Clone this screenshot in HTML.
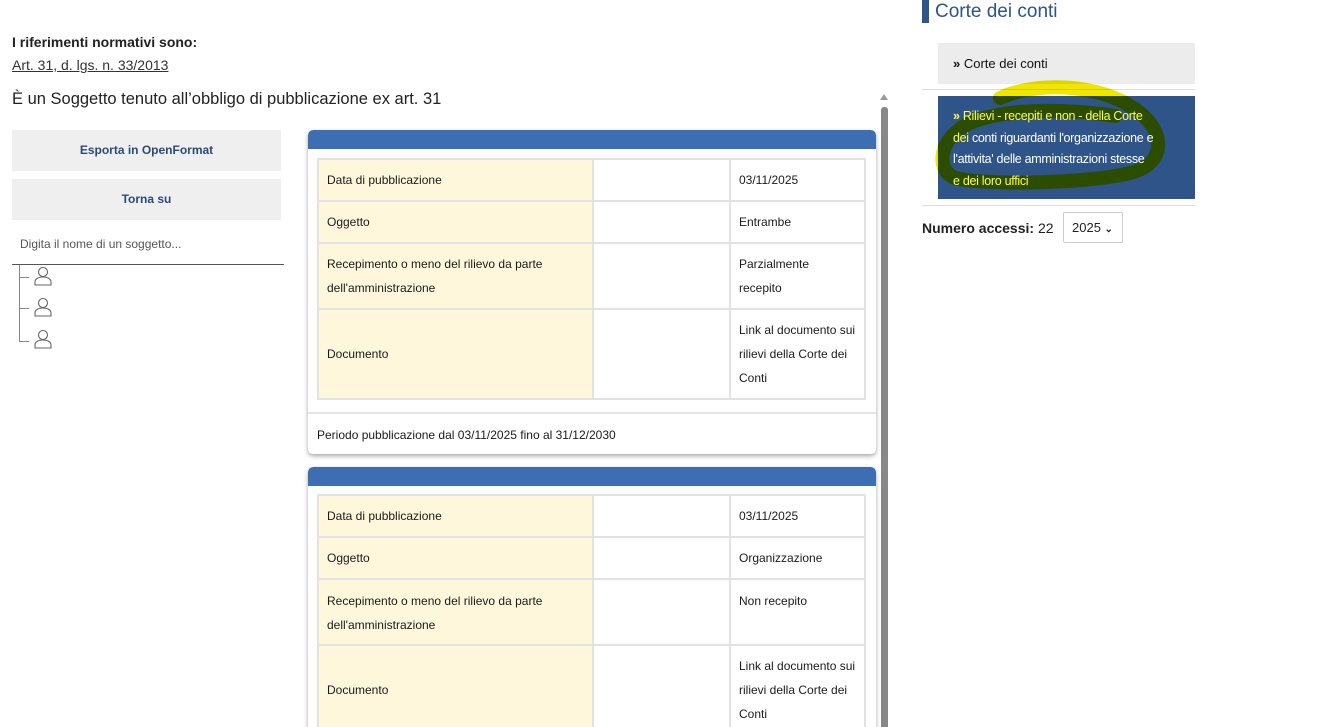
<!DOCTYPE html>
<html><head><meta charset="utf-8"><style>
*{margin:0;padding:0;box-sizing:border-box}
html,body{width:1342px;height:727px;overflow:hidden}
body{background:#fff;font-family:"Liberation Sans",sans-serif;color:#1a1a1a;position:relative}
.a{position:absolute}
.btn{position:absolute;left:12px;width:269px;height:41px;background:#efefef;color:#2e4a73;font-weight:bold;font-size:12px;text-align:center;line-height:41px}
.card{position:absolute;left:308px;width:568px;background:#fff;border-radius:5px;box-shadow:0 2px 5px rgba(0,0,0,.35);overflow:hidden}
.card .hd{height:19px;background:#3d6db3;border-radius:5px 5px 0 0}
table{position:absolute;left:9px;width:549px;border-collapse:collapse;font-size:12px;border:1px solid #ddd}
td{border:2px solid #e2e2e2;padding:0 8px;vertical-align:middle;line-height:24px}
td.l{background:#fff7dc;width:275px}
td.m{width:137px}
.ft{position:absolute;left:0;width:568px;border-top:2px solid #e4e4e4;font-size:12px;padding-left:9px;line-height:42px}
.person{position:absolute;left:34px;width:18px;height:20px}
</style></head><body>
<div class="a" style="left:12px;top:34px;font-size:14px;font-weight:bold;color:#222">I riferimenti normativi sono:</div>
<div class="a" style="left:12px;top:57px;font-size:14px;color:#333;text-decoration:underline">Art. 31, d. lgs. n. 33/2013</div>
<div class="a" style="left:12px;top:90px;font-size:16.5px;color:#222">È un Soggetto tenuto all’obbligo di pubblicazione ex art. 31</div>

<div class="btn" style="top:130px">Esporta in OpenFormat</div>
<div class="btn" style="top:179px">Torna su</div>
<div class="a" style="left:20px;top:237px;font-size:12px;color:#555">Digita il nome di un soggetto...</div>
<div class="a" style="left:12px;top:264px;width:272px;height:1px;background:#555"></div>
<div class="a" style="left:19px;top:265px;width:1px;height:77px;background:#888"></div>
<div class="a" style="left:19px;top:277px;width:10px;height:1px;background:#888"></div>
<div class="a" style="left:19px;top:308px;width:10px;height:1px;background:#888"></div>
<div class="a" style="left:19px;top:341px;width:10px;height:1px;background:#888"></div>
<svg class="person" style="top:266px" viewBox="0 0 18 20"><circle cx="9" cy="6" r="4.5" fill="none" stroke="#666" stroke-width="1.1"/><path d="M1 19v-3c0-3 3-5 8-5s8 2 8 5v3z" fill="none" stroke="#666" stroke-width="1.1"/></svg>
<svg class="person" style="top:297px" viewBox="0 0 18 20"><circle cx="9" cy="6" r="4.5" fill="none" stroke="#666" stroke-width="1.1"/><path d="M1 19v-3c0-3 3-5 8-5s8 2 8 5v3z" fill="none" stroke="#666" stroke-width="1.1"/></svg>
<svg class="person" style="top:329px" viewBox="0 0 18 20"><circle cx="9" cy="6" r="4.5" fill="none" stroke="#666" stroke-width="1.1"/><path d="M1 19v-3c0-3 3-5 8-5s8 2 8 5v3z" fill="none" stroke="#666" stroke-width="1.1"/></svg>

<div class="card" style="top:130px;height:324px"><div class="hd"></div>
<table style="top:28px">
<tr style="height:42px"><td class="l">Data di pubblicazione</td><td class="m"></td><td>03/11/2025</td></tr>
<tr style="height:42px"><td class="l">Oggetto</td><td class="m"></td><td>Entrambe</td></tr>
<tr style="height:66px"><td class="l">Recepimento o meno del rilievo da parte dell'amministrazione</td><td class="m"></td><td>Parzialmente<br>recepito</td></tr>
<tr style="height:90px"><td class="l">Documento</td><td class="m"></td><td>Link al documento sui rilievi della Corte dei Conti</td></tr>
</table>
<div class="ft" style="top:282px">Periodo pubblicazione dal 03/11/2025 fino al 31/12/2030</div>
</div>

<div class="card" style="top:467px;height:270px;border-radius:5px 5px 0 0"><div class="hd"></div>
<table style="top:27px">
<tr style="height:42px"><td class="l">Data di pubblicazione</td><td class="m"></td><td>03/11/2025</td></tr>
<tr style="height:42px"><td class="l">Oggetto</td><td class="m"></td><td>Organizzazione</td></tr>
<tr style="height:66px"><td class="l" style="vertical-align:top;padding-top:9px">Recepimento o meno del rilievo da parte dell'amministrazione</td><td class="m"></td><td style="vertical-align:top;padding-top:9px">Non recepito</td></tr>
<tr style="height:90px"><td class="l">Documento</td><td class="m"></td><td>Link al documento sui rilievi della Corte dei Conti</td></tr>
</table>
</div>

<div class="a" style="left:880px;top:94px;width:0;height:0;border-left:4px solid transparent;border-right:4px solid transparent;border-bottom:6px solid #999"></div>
<div class="a" style="left:881px;top:107px;width:7px;height:620px;background:#888;border-radius:3px 3px 0 0"></div>

<div class="a" style="left:922px;top:0;width:7px;height:23px;background:#2e5489"></div>
<div class="a" style="left:935px;top:0;font-size:19px;color:#2e5489;line-height:23px">Corte dei conti</div>
<div class="a" style="left:938px;top:43px;width:257px;height:41px;background:#ececec;font-size:13px;line-height:41px;padding-left:15px;color:#111"><b>»</b> Corte dei conti</div>
<div class="a" style="left:922px;top:89px;width:273px;height:1px;background:#ddd"></div>
<div class="a" style="left:938px;top:96px;width:257px;height:103px;background:#2e5489"></div>
<svg class="a" style="left:930px;top:78px;mix-blend-mode:multiply" width="250" height="120"><path d="M70 20 C110 2 170 8 200 28 C235 48 240 85 200 95 C160 105 60 108 25 100 C5 92 8 60 40 45 C80 28 150 32 185 38" fill="none" stroke="#f0e600" stroke-width="14" stroke-linecap="round"/></svg>
<div class="a" style="left:953px;top:106px;width:240px;font-size:12.5px;line-height:21.5px;color:#fff;white-space:nowrap;letter-spacing:-0.3px"><span style="color:#ffff40"><b>»</b> Rilievi - recepiti e non - della Corte</span><br><span style="color:#ffff40">dei</span> conti riguardanti l'organizzazione e<br>l'attivita' delle amministrazioni stesse<br><span style="color:#ffff40">e dei loro uffici</span></div>
<div class="a" style="left:922px;top:205px;width:273px;height:1px;background:#ddd"></div>
<div class="a" style="left:922px;top:220px;font-size:14px;color:#222"><b>Numero accessi:</b> 22</div>
<div class="a" style="left:1063px;top:212px;width:60px;height:31px;border:1px solid #ccc;border-radius:2px;font-size:13px;line-height:29px;padding-left:8px;color:#222">2025 <span style="font-size:10px;font-weight:bold">&#8964;</span></div>
</body></html>
